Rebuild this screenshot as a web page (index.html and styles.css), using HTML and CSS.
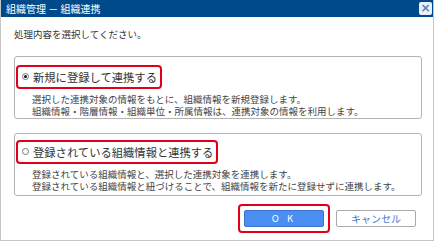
FILE: index.html
```html
<!DOCTYPE html>
<html lang="ja">
<head>
<meta charset="utf-8">
<link rel="stylesheet" href="styles.css">
</head>
<body>
<div class="dialog">
  <div class="titlebar">
    <span class="title">組織管理 － 組織連携</span>
    <span class="close">×</span>
  </div>
  <div class="content">
    <p class="lead">処理内容を選択してください。</p>
    <div class="option">
      <label class="choice"><span class="radio checked"></span>新規に登録して連携する</label>
      <p class="desc">選択した連携対象の情報をもとに、組織情報を新規登録します。<br>組織情報・階層情報・組織単位・所属情報は、連携対象の情報を利用します。</p>
    </div>
    <div class="option">
      <label class="choice"><span class="radio"></span>登録されている組織情報と連携する</label>
      <p class="desc">登録されている組織情報と、選択した連携対象を連携します。<br>登録されている組織情報と紐づけることで、組織情報を新たに登録せずに連携します。</p>
    </div>
    <div class="buttons">
      <div class="highlight"><button class="btn ok">O K</button></div>
      <button class="btn cancel">キャンセル</button>
    </div>
  </div>
</div>
</body>
</html>
```
FILE: styles.css
```css
* { box-sizing: border-box; }
html, body { margin: 0; padding: 0; background: #fff; }
body { font-family: "Noto Sans CJK JP", "Noto Sans", sans-serif; color: #333; }
.dialog {
  width: 434px;
  height: 241px;
  border: 1px solid #c6c6c6;
  border-top: 0;
  display: flex;
  flex-direction: column;
}
.titlebar {
  height: 17px;
  flex: none;
  background: #004a8b;
  display: flex;
  align-items: center;
  justify-content: space-between;
  padding: 0 1px 0 5px;
}
.title {
  color: #fff;
  font-size: 10px;
  line-height: 17px;
}
.close {
  width: 13px;
  height: 13px;
  background: #e8f0fa;
  border-radius: 2px;
  color: #4f7fbf;
  font-size: 12px;
  font-weight: bold;
  line-height: 13px;
  text-align: center;
  font-family: "DejaVu Sans", sans-serif;
}
.content {
  padding: 0 11px 0 13px;
  display: flex;
  flex-direction: column;
}
.lead {
  margin: 10px 0 0 0;
  height: 14px;
  font-size: 9.5px;
  line-height: 14px;
}
.option {
  height: 63px;
  flex: none;
  border: 1px solid #b4b4b4;
  border-radius: 3px;
  padding: 2px 1px 0 1px;
  margin-top: 15px;
}
.option + .option { margin-top: 14px; }
.choice {
  display: inline-flex;
  align-items: center;
  height: 24px;
  border: 2px solid #e1001b;
  border-radius: 4px;
  padding: 0 3px 0 4px;
  font-size: 11.3px;
  color: #333;
}
.radio {
  width: 7px;
  height: 7px;
  border: 1px solid #777;
  border-radius: 50%;
  margin-right: 4px;
  display: inline-flex;
  align-items: center;
  justify-content: center;
}
.radio.checked::after {
  content: "";
  width: 3px;
  height: 3px;
  border-radius: 50%;
  background: #111;
}
.desc {
  margin: 4px 0 0 16px;
  font-size: 9.5px;
  line-height: 12px;
  color: #444;
}
.buttons {
  display: flex;
  justify-content: flex-end;
  align-items: center;
  gap: 6px;
  margin-top: 8px;
  padding-right: 6px;
}
.highlight {
  border: 2px solid #e1001b;
  border-radius: 4px;
  padding: 4px;
  display: flex;
}
.btn {
  width: 80px;
  height: 17px;
  border-radius: 2px;
  font-family: "Noto Sans CJK JP", "Noto Sans", sans-serif;
  font-size: 9.5px;
  line-height: 15px;
  padding: 0;
}
.ok {
  background: #4b8ef1;
  border: 1px solid #3c74cc;
  color: #fff;
  letter-spacing: 3px;
}
.cancel {
  background: #fff;
  border: 1px solid #aaa;
  color: #3f78d8;
  font-size: 10px;
}
```
